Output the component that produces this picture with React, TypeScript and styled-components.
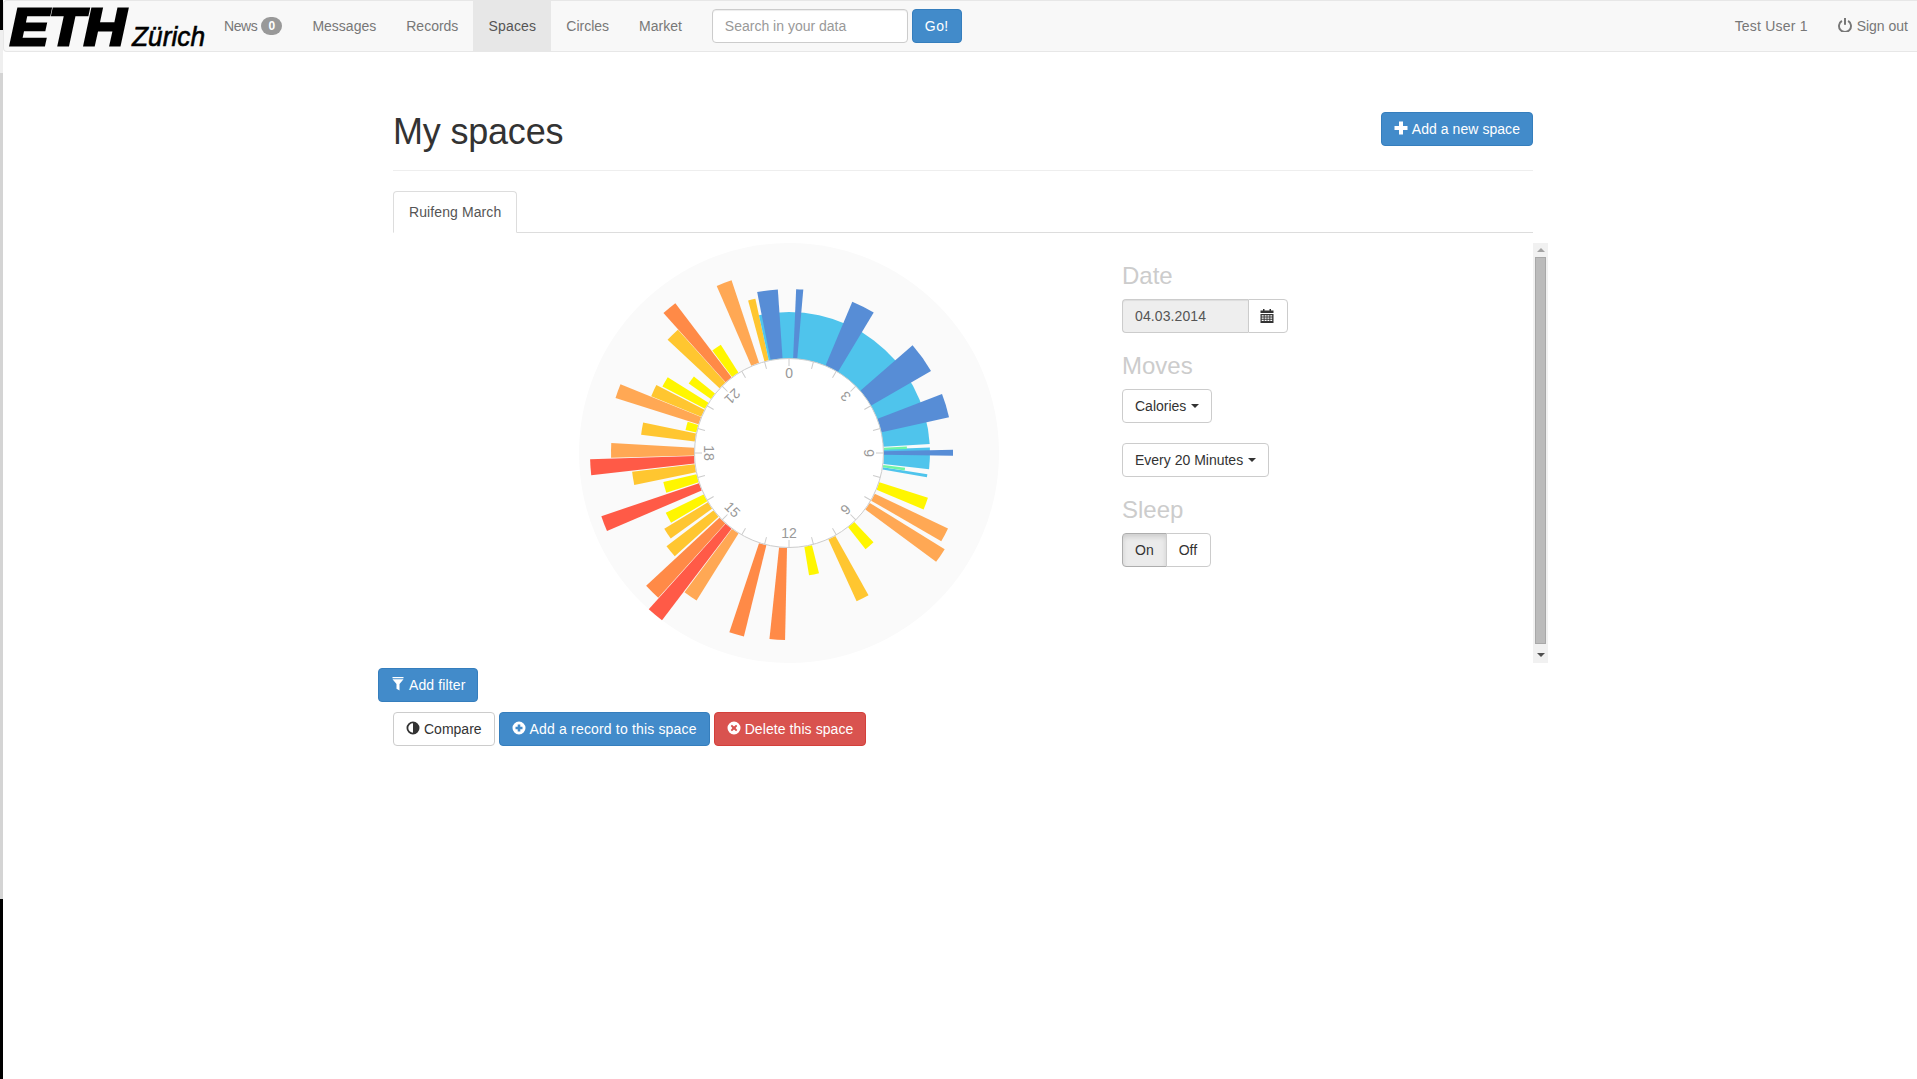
import React from 'react'
import styled, { createGlobalStyle, css } from 'styled-components'

const GlobalStyle = createGlobalStyle`
  html, body {
    margin: 0;
    height: 100%;
    background: #fff;
    overflow: hidden;
  }
  body {
    font-family: "Liberation Sans", Arial, sans-serif;
    font-size: 14px;
    line-height: 20px;
    color: #333;
  }
  * {
    box-sizing: border-box;
  }
`

const Page = styled.div`
  display: flex;
  height: 1079px;
`

const EdgeStrip = styled.div`
  width: 3px;
  flex: none;
  display: flex;
  flex-direction: column;
`

const EdgePiece = styled.div<{ $h: number; $c: string }>`
  height: ${p => p.$h}px;
  background: ${p => p.$c};
`

const Main = styled.div`
  flex: 1;
  min-width: 0;
`

const Navbar = styled.nav`
  display: flex;
  align-items: stretch;
  height: 52px;
  background: #f8f8f8;
  border: 1px solid #e7e7e7;
  border-right: 0;
  border-radius: 4px 0 0 4px;
`

const Logo = styled.svg`
  width: 205px;
  height: 50px;
  flex: none;
  display: block;
  overflow: visible;
`

const NavLink = styled.a<{ $active?: boolean; $track?: number }>`
  display: flex;
  align-items: center;
  padding: 0 15px;
  letter-spacing: ${p => p.$track || 0}px;
  color: ${p => (p.$active ? '#555' : '#777')};
  background: ${p => (p.$active ? '#e7e7e7' : 'transparent')};
`

const Badge = styled.span`
  display: inline-block;
  margin-left: 4px;
  min-width: 21px;
  padding: 3px 7px;
  font-size: 12px;
  font-weight: bold;
  line-height: 12px;
  letter-spacing: 0;
  color: #fff;
  text-align: center;
  background: #999;
  border-radius: 10px;
`

const SearchForm = styled.form`
  display: flex;
  align-items: center;
  gap: 4px;
  margin: 0 0 0 15px;
`

const SearchInput = styled.input`
  width: 196px;
  height: 34px;
  padding: 6px 12px;
  font: inherit;
  color: #555;
  background: #fff;
  border: 1px solid #ccc;
  border-radius: 4px;
  box-shadow: inset 0 1px 1px rgba(0, 0, 0, 0.075);
  &::placeholder {
    color: #999;
    opacity: 1;
  }
`

const NavRight = styled.div`
  display: flex;
  margin-left: auto;
`

const SignOutLink = styled(NavLink)`
  padding-right: 9px;
  svg {
    margin-right: 5px;
    margin-top: -2px;
  }
`

const Container = styled.main`
  width: 1170px;
  margin-left: 375px;
  padding: 60px 0 0 15px;
`

const PageHeader = styled.header`
  display: flex;
  justify-content: space-between;
  align-items: flex-start;
  width: 1140px;
  height: 59px;
  border-bottom: 1px solid #eee;
`

const Title = styled.h1`
  margin: 0;
  font-size: 36px;
  font-weight: 500;
  line-height: 39.6px;
  letter-spacing: -0.2px;
  color: #333;
`

const Tabs = styled.div`
  display: flex;
  width: 1140px;
  margin-top: 20px;
  border-bottom: 1px solid #ddd;
`

const Tab = styled.a`
  display: block;
  margin-bottom: -1px;
  padding: 10px 15px;
  letter-spacing: 0.1px;
  color: #555;
  background: #fff;
  border: 1px solid #ddd;
  border-bottom-color: #fff;
  border-radius: 4px 4px 0 0;
`

const Panel = styled.section`
  display: flex;
  width: 1155px;
  height: 420px;
  margin-top: 10px;
`

const ChartColumn = styled.div`
  width: 729px;
  flex: none;
  padding-left: 186px;
`

const ChartSvg = styled.svg`
  display: block;
  width: 420px;
  height: 420px;
`

const Controls = styled.div`
  flex: 1;
`

const ControlTitle = styled.h3`
  margin: 20px 0 10px;
  font-size: 24px;
  font-weight: 500;
  line-height: 26px;
  color: #ccc;
`

const btnBase = css`
  display: inline-flex;
  align-items: center;
  height: 34px;
  padding: 6px 12px;
  font: inherit;
  white-space: nowrap;
  border: 1px solid;
  border-radius: 4px;
`

const variants = {
  primary: css`
    color: #fff;
    background: #428bca;
    border-color: #357ebd;
  `,
  danger: css`
    color: #fff;
    background: #d9534f;
    border-color: #d43f3a;
  `,
  plain: css`
    color: #333;
    background: #fff;
    border-color: #ccc;
  `
}

const Button = styled.button<{ $kind?: keyof typeof variants; $track?: number }>`
  ${btnBase}
  ${p => variants[p.$kind || 'plain']}
  letter-spacing: ${p => p.$track || 0}px;
  svg {
    margin-right: 4px;
    margin-top: -2px;
  }
`

const InputGroup = styled.div`
  display: flex;
  width: 166px;
`

const DateField = styled.input`
  width: 126px;
  height: 34px;
  padding: 6px 12px;
  font: inherit;
  letter-spacing: 0.1px;
  color: #555;
  background: #eee;
  border: 1px solid #ccc;
  border-right: 0;
  border-radius: 4px 0 0 4px;
  box-shadow: inset 0 1px 1px rgba(0, 0, 0, 0.075);
`

const CalendarButton = styled(Button)`
  width: 40px;
  justify-content: center;
  padding: 0;
  border-radius: 0 4px 4px 0;
  svg {
    margin: -1px 2px 0 0;
  }
`

const Caret = styled.span`
  width: 0;
  height: 0;
  margin-left: 5px;
  border-top: 4px solid #333;
  border-left: 4px solid transparent;
  border-right: 4px solid transparent;
`

const DropdownStack = styled.div`
  display: flex;
  flex-direction: column;
  align-items: flex-start;
  gap: 20px;
`

const Toggle = styled.div`
  display: flex;
`

const ToggleOn = styled(Button)`
  background: #ebebeb;
  border-color: #adadad;
  border-radius: 4px 0 0 4px;
  box-shadow: inset 0 3px 5px rgba(0, 0, 0, 0.125);
`

const ToggleOff = styled(Button)`
  margin-left: -1px;
  padding-right: 13px;
  border-radius: 0 4px 4px 0;
`

const Scrollbar = styled.div`
  width: 15px;
  flex: none;
  display: flex;
  flex-direction: column;
  align-items: center;
  background: #f1f1f1;
`

const ArrowBox = styled.div<{ $h: number }>`
  height: ${p => p.$h}px;
  display: flex;
  align-items: center;
  justify-content: center;
`

const ArrowUp = styled.span`
  border-bottom: 4px solid #a3a3a3;
  border-left: 4px solid transparent;
  border-right: 4px solid transparent;
`

const ArrowDown = styled.span`
  margin-top: 2px;
  border-top: 4px solid #505050;
  border-left: 4px solid transparent;
  border-right: 4px solid transparent;
`

const Thumb = styled.div`
  width: 11px;
  flex: 1;
  background: #bbb;
  border: 1px solid #a8a8a8;
`

const FilterRow = styled.div`
  margin: 5px 0 0 -15px;
`

const ActionRow = styled.div`
  display: flex;
  gap: 4px;
  margin-top: 10px;
`

const Glyph = styled.svg`
  width: 14px;
  height: 14px;
  flex: none;
  fill: currentColor;
`

const PlusIcon = () => (
  <Glyph viewBox="0 0 14 14">
    <path d="M5 .5h4V5h4.500v4H9v4.500H5V9H.5V5H5z" />
  </Glyph>
)

const FilterIcon = () => (
  <Glyph viewBox="0 0 14 14">
    <path d="M1.500 0h11v1.200h-11zM1.500 2.200h11L8.500 7v6.500l-3-1.800V7z" />
  </Glyph>
)

const AdjustIcon = () => (
  <Glyph viewBox="0 0 14 14">
    <path fillRule="evenodd" d="M7 .5a6.500 6.500 0 1 1 0 13 6.500 6.500 0 0 1 0-13zM7 2.300a4.700 4.700 0 0 0 0 9.400z" />
  </Glyph>
)

const PlusSignIcon = () => (
  <Glyph viewBox="0 0 14 14">
    <path fillRule="evenodd" d="M7 .5a6.500 6.500 0 1 1 0 13 6.500 6.500 0 0 1 0-13zM5.700 3.500v2.200H3.500v2.600h2.200v2.200h2.600V8.300h2.200V5.700H8.300V3.500z" />
  </Glyph>
)

const RemoveSignIcon = () => (
  <Glyph viewBox="0 0 14 14">
    <path fillRule="evenodd" d="M7 .5a6.500 6.500 0 1 1 0 13 6.500 6.500 0 0 1 0-13zM4.900 3.700L3.700 4.900 5.400 7 3.700 9.100l1.200 1.200L7 8.600l2.100 1.700 1.200-1.200L8.600 7l1.700-2.100-1.200-1.200L7 5.400z" />
  </Glyph>
)

const CalendarIcon = () => (
  <Glyph viewBox="0 0 14 14">
    <path fillRule="evenodd" d="M3 0h1.500v1.500h5V0H11v1.500h2.500V4H.5V1.500H3zM.5 5h13v9H.5zM1.700 6.200v1.300h2V6.200zm2.900 0v1.300h2V6.200zm2.800 0v1.300h2V6.200zm2.900 0v1.300h1.900V6.200zM1.700 8.500v1.300h2V8.500zm2.900 0v1.300h2V8.500zm2.800 0v1.300h2V8.500zm2.900 0v1.300h1.900V8.500zM1.700 10.800v1.300h2v-1.300zm2.900 0v1.300h2v-1.300zm2.800 0v1.300h2v-1.300zm2.900 0v1.300h1.900v-1.300z" />
  </Glyph>
)

const PowerIcon = () => (
  <Glyph viewBox="0 0 14 14">
    <path d="M3.900 2.900a6 6 0 1 0 6.200 0" fill="none" stroke="currentColor" strokeWidth="1.900" />
    <rect x="6" y="0" width="2" height="6.800" />
  </Glyph>
)

const C = 210
const INNER = 95

const BLUE = '#4fc4ec'
const DARK = '#578dd6'
const GREEN = '#6ff5a6'
const YELLOW = '#fff600'
const GOLD = '#ffc630'
const LIGHT = '#ffa854'
const ORANGE = '#ff8a47'
const RED = '#ff5a47'

type Wedge = [number, number, number, string]

// start angle, end angle (clockwise from the top), outer radius, colour
const wedges: Wedge[] = [
  [-15, -12.3, 158, GOLD],
  [-12.3, 86.3, 141, BLUE],
  [87.8, 96.6, 141, BLUE],
  [98.7, 100, 140, BLUE],
  [86.8, 88, 118, GREEN],
  [97.2, 98.6, 117, GREEN],
  [-11.2, -3.9, 164, DARK],
  [2.5, 5, 164, DARK],
  [22.7, 31.1, 164, DARK],
  [48.9, 60, 164, DARK],
  [68.9, 77.4, 164, DARK],
  [88.9, 91, 164, DARK],
  [107.9, 112.8, 146, YELLOW],
  [115.4, 120.1, 176, LIGHT],
  [121.7, 126.5, 183, LIGHT],
  [136.6, 141.5, 123, YELLOW],
  [150.8, 155.5, 163, GOLD],
  [166, 170.7, 124, YELLOW],
  [181.2, 186, 187, ORANGE],
  [193.8, 198.4, 189, ORANGE],
  [212.1, 216.9, 174, LIGHT],
  [217.2, 221.9, 210, RED],
  [222.1, 227.1, 195, ORANGE],
  [227.9, 232.7, 154, GOLD],
  [234.1, 238.7, 146, GOLD],
  [239.4, 244.1, 137, YELLOW],
  [246.8, 251.4, 198, RED],
  [252, 257, 129, YELLOW],
  [258.3, 263.2, 158, GOLD],
  [263.6, 268.2, 199, RED],
  [268.5, 273.2, 178, LIGHT],
  [277, 281.8, 149, GOLD],
  [282.5, 287.1, 106, YELLOW],
  [287.6, 292.2, 182, LIGHT],
  [292.4, 297.1, 149, GOLD],
  [297.7, 302, 143, YELLOW],
  [304.7, 308.8, 122, YELLOW],
  [313, 318, 166, GOLD],
  [318.1, 322.8, 188, ORANGE],
  [323.2, 327.8, 128, YELLOW],
  [336.6, 341.6, 182, LIGHT]
]

const point = (angle: number, r: number) => {
  const a = (angle * Math.PI) / 180
  return [C + r * Math.sin(a), C - r * Math.cos(a)].map(v => v.toFixed(2)).join(' ')
}

const wedgePath = ([from, to, r]: Wedge) =>
  `M${point(from, INNER)}L${point(from, r)}A${r} ${r} 0 ${to - from > 180 ? 1 : 0} 1 ${point(to, r)}L${point(to, INNER)}Z`

const ticks = Array.from({ length: 24 }, (_, i) => i * 15)
const labels = [0, 3, 6, 9, 12, 15, 18, 21]

const SleepChart = () => (
  <ChartSvg viewBox="0 0 420 420">
    <circle cx={C} cy={C} r={C} fill="#fafafa" />
    {wedges.map((w, i) => (
      <path key={i} d={wedgePath(w)} fill={w[3]} />
    ))}
    <circle cx={C} cy={C} r={94.5} fill="#fff" stroke="#ccc" strokeWidth="1" />
    {ticks.map(angle => (
      <line
        key={angle}
        x1={C}
        x2={C}
        y1={C - 94.5}
        y2={C - 87}
        stroke="#ccc"
        transform={`rotate(${angle} ${C} ${C})`}
      />
    ))}
    {labels.map(h => (
      <text
        key={h}
        transform={`rotate(${h * 15} ${C} ${C}) translate(${C} ${C - 85}) rotate(180)`}
        textAnchor="middle"
        fontFamily="'Liberation Sans', Arial, sans-serif"
        fontSize="14"
        fill="#999"
      >
        {h}
      </text>
    ))}
  </ChartSvg>
)

const EthLogo = () => (
  <Logo viewBox="0 0 205 50">
    <text
      x="6"
      y="43.500"
      fontFamily="'Liberation Sans', Arial, sans-serif"
      fontWeight="bold"
      fontStyle="italic"
      fontSize="52"
      textLength="116"
      lengthAdjust="spacingAndGlyphs"
      stroke="#000"
      strokeWidth="3"
    >
      ETH
    </text>
    <text
      x="128"
      y="44.500"
      fontFamily="'Liberation Sans', Arial, sans-serif"
      fontStyle="italic"
      fontSize="27"
      textLength="73"
      lengthAdjust="spacingAndGlyphs"
      stroke="#000"
      strokeWidth="0.6"
    >
      Zürich
    </text>
  </Logo>
)

export default function App() {
  return (
    <Page>
      <GlobalStyle />
      <EdgeStrip>
        <EdgePiece $h={30} $c="#000" />
        <EdgePiece $h={43} $c="#efefef" />
        <EdgePiece $h={826} $c="#d4d4d4" />
        <EdgePiece $h={180} $c="#000" />
      </EdgeStrip>
      <Main>
        <Navbar>
          <EthLogo />
          <NavLink $track={-0.4}>
            News<Badge>0</Badge>
          </NavLink>
          <NavLink>Messages</NavLink>
          <NavLink>Records</NavLink>
          <NavLink $active $track={0.2}>
            Spaces
          </NavLink>
          <NavLink>Circles</NavLink>
          <NavLink>Market</NavLink>
          <SearchForm>
            <SearchInput placeholder="Search in your data" />
            <Button type="button" $kind="primary" $track={0.4}>
              Go!
            </Button>
          </SearchForm>
          <NavRight>
            <NavLink $track={0.2}>Test User 1</NavLink>
            <SignOutLink>
              <PowerIcon />
              Sign out
            </SignOutLink>
          </NavRight>
        </Navbar>
        <Container>
          <PageHeader>
            <Title>My spaces</Title>
            <Button $kind="primary" $track={0.05}>
              <PlusIcon />
              Add a new space
            </Button>
          </PageHeader>
          <Tabs>
            <Tab>Ruifeng March</Tab>
          </Tabs>
          <Panel>
            <ChartColumn>
              <SleepChart />
            </ChartColumn>
            <Controls>
              <ControlTitle>Date</ControlTitle>
              <InputGroup>
                <DateField readOnly value="04.03.2014" />
                <CalendarButton>
                  <CalendarIcon />
                </CalendarButton>
              </InputGroup>
              <ControlTitle>Moves</ControlTitle>
              <DropdownStack>
                <Button>
                  Calories
                  <Caret />
                </Button>
                <Button>
                  Every 20 Minutes
                  <Caret />
                </Button>
              </DropdownStack>
              <ControlTitle>Sleep</ControlTitle>
              <Toggle>
                <ToggleOn>On</ToggleOn>
                <ToggleOff>Off</ToggleOff>
              </Toggle>
            </Controls>
            <Scrollbar>
              <ArrowBox $h={14}>
                <ArrowUp />
              </ArrowBox>
              <Thumb />
              <ArrowBox $h={19}>
                <ArrowDown />
              </ArrowBox>
            </Scrollbar>
          </Panel>
          <FilterRow>
            <Button $kind="primary" $track={0.12}>
              <FilterIcon />
              Add filter
            </Button>
          </FilterRow>
          <ActionRow>
            <Button>
              <AdjustIcon />
              Compare
            </Button>
            <Button $kind="primary" $track={0.17}>
              <PlusSignIcon />
              Add a record to this space
            </Button>
            <Button $kind="danger" $track={0.08}>
              <RemoveSignIcon />
              Delete this space
            </Button>
          </ActionRow>
        </Container>
      </Main>
    </Page>
  )
}
